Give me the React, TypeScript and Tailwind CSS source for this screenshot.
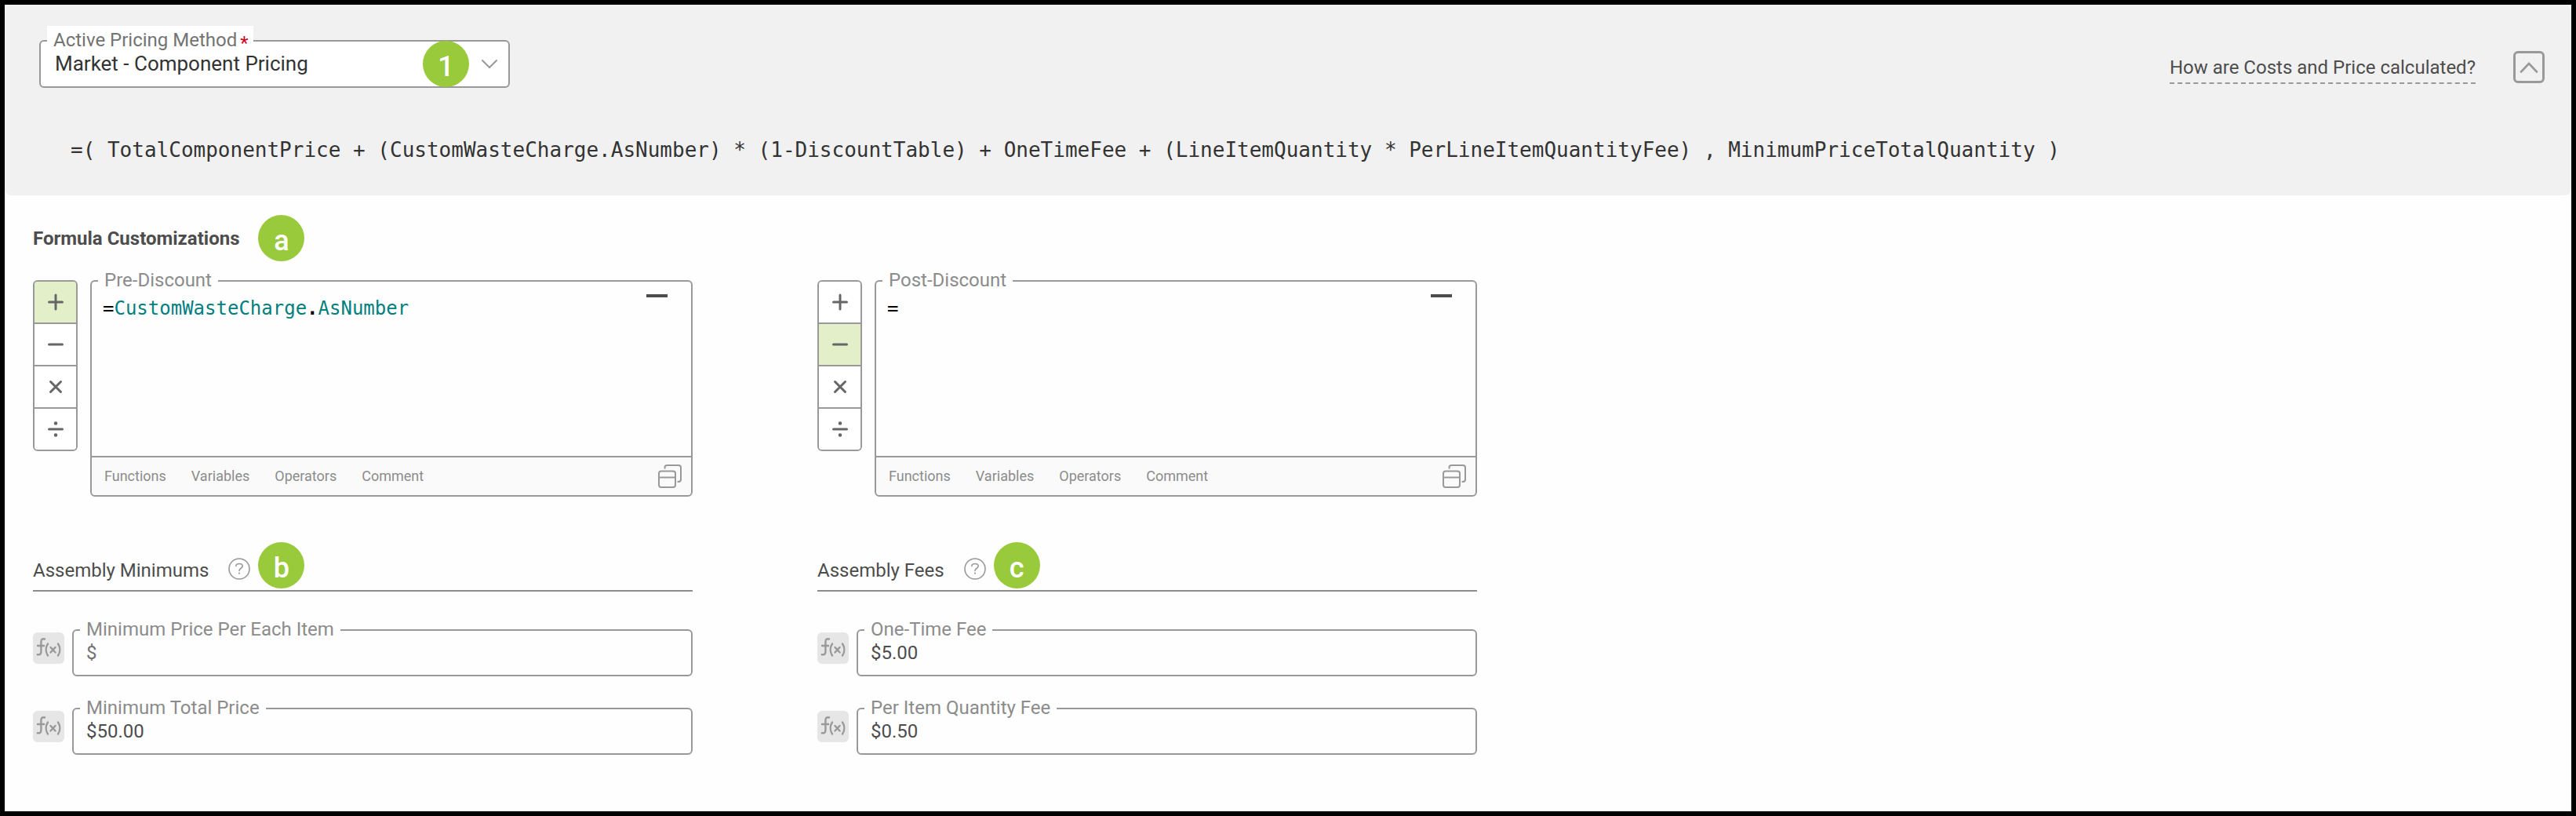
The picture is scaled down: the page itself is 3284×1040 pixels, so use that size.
import { useState, type ReactNode } from "react";

type Operator = "add" | "subtract" | "multiply" | "divide";

const OPERATORS: { id: Operator; label: string; icon: ReactNode }[] = [
  { id: "add", label: "Add", icon: <path d="M3.500 12h17M12 3v18" /> },
  { id: "subtract", label: "Subtract", icon: <path d="M3.500 12h17" /> },
  { id: "multiply", label: "Multiply", icon: <path d="M5.500 5.500l13 13M18.500 5.500l-13 13" /> },
  {
    id: "divide",
    label: "Divide",
    icon: (
      <>
        <path d="M3.500 12h17" />
        <circle cx="12" cy="4.500" r="1.3" fill="currentColor" strokeWidth="2" />
        <circle cx="12" cy="19.500" r="1.3" fill="currentColor" strokeWidth="2" />
      </>
    ),
  },
];

const EDITOR_MENUS = ["Functions", "Variables", "Operators", "Comment"];

function Badge({ children }: { children: ReactNode }) {
  return (
    <span className="flex size-[59px] shrink-0 items-center justify-center rounded-full bg-[#99ca3c] pt-1.5 text-4xl font-medium text-white">
      {children}
    </span>
  );
}

function Highlighted({ code }: { code: string }) {
  return (
    <>
      {code.split(/(\w+)/).map((part, i) =>
        /^\w+$/.test(part) ? (
          <span key={i} className="text-[#007f7f]">
            {part}
          </span>
        ) : (
          <span key={i} className={part === "." ? "font-bold" : ""}>
            {part}
          </span>
        ),
      )}
    </>
  );
}

function FormulaEditor({ id, label, initial, operator }: { id: string; label: string; initial: string; operator: Operator }) {
  const [selected, setSelected] = useState<Operator>(operator);
  const [code, setCode] = useState(initial);
  return (
    <div className="flex items-start gap-4">
      <div
        role="group"
        aria-label={`${label} operator`}
        className="flex w-[57px] shrink-0 flex-col divide-y-2 divide-[#999] overflow-hidden rounded-md border-2 border-[#999] bg-white"
      >
        {OPERATORS.map((op) => (
          <button
            key={op.id}
            type="button"
            aria-label={op.label}
            aria-pressed={selected === op.id}
            onClick={() => setSelected(op.id)}
            className={`flex h-[54px] items-center justify-center text-[#666] last:h-[52px] ${selected === op.id ? "bg-[#e3efc9]" : "bg-white"}`}
          >
            <svg viewBox="0 0 24 24" className="size-6 fill-none stroke-current" strokeWidth="3" strokeLinecap="round">
              {op.icon}
            </svg>
          </button>
        ))}
      </div>
      <div className="relative min-w-0 flex-1 rounded-md border-2 border-[#999] bg-[#fefefe]">
        <label htmlFor={id} className="absolute -top-4 left-2 bg-[#fefefe] px-2 text-2xl/7 text-[#8c8c8c]">
          {label}
        </label>
        <div className="relative h-[222px] font-['DejaVu_Sans_Mono',monospace] text-2xl/8">
          <pre aria-hidden="true" className="h-full overflow-hidden px-3.5 pt-[18px] font-[inherit] text-black">
            <Highlighted code={code} />
          </pre>
          <textarea
            id={id}
            value={code}
            spellCheck={false}
            onChange={(e) => setCode(e.target.value)}
            className="absolute inset-0 resize-none bg-transparent px-3.5 pt-[18px] text-transparent caret-black outline-none"
          />
          <button type="button" aria-label="Minimize" className="absolute top-4 right-[30px] h-1 w-[27px] bg-[#4d4d4d]" />
        </div>
        <div className="flex h-[50px] items-center gap-8 rounded-b-md border-t-2 border-[#999] bg-[#fafafa] pr-3 pl-4 text-lg text-[#8c8c8c]">
          {EDITOR_MENUS.map((menu) => (
            <button key={menu} type="button">
              {menu}
            </button>
          ))}
          <button type="button" aria-label="Open in window" className="ml-auto">
            <svg viewBox="0 0 30 30" className="size-[30px] fill-none stroke-[#999]" strokeWidth="2">
              <rect x="1" y="8.500" width="21" height="20.500" rx="3" />
              <path d="M1 16.500h21M8.500 5.500V4a3 3 0 0 1 3-3H26a3 3 0 0 1 3 3v15a3 3 0 0 1-3 3h-1.500" />
            </svg>
          </button>
        </div>
      </div>
    </div>
  );
}

function MoneyField({ id, label, value }: { id: string; label: string; value: string }) {
  return (
    <div className="flex items-start gap-2.5">
      <button type="button" aria-label={`Edit formula for ${label}`} className="mt-1 shrink-0 rounded-md bg-[#e6e6e6] text-[#999]">
        <svg viewBox="0 0 40 40" className="size-10 fill-none stroke-current" strokeWidth="2.400" strokeLinecap="round">
          <path d="M15 8.500c-3-.8-4.600.3-4.600 3.500v12.500c0 3-1.600 4.300-4.600 3.700M6 17h8" />
          <path d="M19 14.500c-3 4.500-3 10.500 0 15M32 14.500c3 4.500 3 10.500 0 15M22.500 19l6 6.500M28.500 19l-6 6.500" />
        </svg>
      </button>
      <div className="relative min-w-0 flex-1">
        <label htmlFor={id} className="absolute -top-3.5 left-2.5 bg-[#fefefe] px-2 text-2xl/7 text-[#8c8c8c]">
          {label}
        </label>
        <input
          id={id}
          type="text"
          defaultValue={value}
          placeholder="$"
          className="block h-[60px] w-full rounded-md border-2 border-[#999] bg-[#fefefe] px-4 text-2xl text-[#4d4d4d] outline-none placeholder:text-[#737373]"
        />
      </div>
    </div>
  );
}

function Section({ title, badge, children }: { title: string; badge: string; children: ReactNode }) {
  return (
    <section>
      <div className="flex h-[63px] items-start border-b-2 border-[#8c8c8c]">
        <h2 className="mt-5 text-2xl">{title}</h2>
        <button type="button" aria-label={`Help for ${title}`} className="mt-5 ml-[25px]">
          <svg viewBox="0 0 28 28" className="size-7 fill-none stroke-[#999]" strokeWidth="1.600" strokeLinecap="round">
            <circle cx="14" cy="14" r="13" />
            <path d="M9.800 10.500C10 6.500 18.200 6.500 18.200 10.500C18.200 13.500 14 13 14 16.500" />
            <path d="M14 19.500v.3" strokeWidth="2" />
          </svg>
        </button>
        <div className="ml-2.5">
          <Badge>{badge}</Badge>
        </div>
      </div>
      <div className="mt-12 flex flex-col gap-10">{children}</div>
    </section>
  );
}

export default function App() {
  return (
    <div className="min-h-screen border-6 border-black bg-[#fefefe] font-[Roboto,sans-serif] text-[#4d4d4d]">
      <header className="h-[243px] rounded-lg bg-[#f1f1f1]">
        <div className="flex items-start justify-between pt-[45px] pr-[34px] pl-11">
          <div className="relative w-[600px]">
            <label htmlFor="method" className="absolute -top-[18px] left-2.5 flex gap-1 bg-white pt-1 pr-1.5 pl-2 text-2xl/7 text-[#737373]">
              Active Pricing Method <span className="pt-1 text-[#d0021b]">*</span>
            </label>
            <select
              id="method"
              className="block h-[61px] w-full appearance-none rounded-md border-2 border-[#999] bg-white pl-[18px] text-[26px] text-[#333] outline-none"
            >
              <option>Market - Component Pricing</option>
            </select>
            <div className="pointer-events-none absolute inset-y-0 right-4 flex items-center gap-4">
              <Badge>1</Badge>
              <svg viewBox="0 0 20 12" className="h-3 w-5 fill-none stroke-[#999]" strokeWidth="2" strokeLinecap="round">
                <path d="M1 1l9 9 9-9" />
              </svg>
            </div>
          </div>
          <div className="mt-3.5 flex items-start gap-12">
            <a href="#pricing-help" className="border-b-2 border-dashed border-[#999] pt-[5px] pb-[3px] text-2xl">
              How are Costs and Price calculated?
            </a>
            <button
              type="button"
              aria-label="Collapse"
              className="flex h-[41px] w-10 items-center justify-center rounded-md border-3 border-[#999]"
            >
              <svg viewBox="0 0 24 14" className="h-3.5 w-6 fill-none stroke-[#999]" strokeWidth="2.600" strokeLinecap="round">
                <path d="M2 12.500L12 2l10 10.500" />
              </svg>
            </button>
          </div>
        </div>
        <p className="mt-[61px] pl-[84px] font-['DejaVu_Sans_Mono',monospace] text-[26px]/9 text-[#333]">
          =( TotalComponentPrice + (CustomWasteCharge.AsNumber) * (1-DiscountTable) + OneTimeFee + (LineItemQuantity *
          PerLineItemQuantityFee) , MinimumPriceTotalQuantity )
        </p>
      </header>
      <main className="px-9">
        <div className="flex items-center gap-6 pt-[25px]">
          <h1 className="text-2xl font-bold">Formula Customizations</h1>
          <Badge>a</Badge>
        </div>
        <div className="mt-6 grid grid-cols-[repeat(2,minmax(0,841px))] gap-x-[159px] gap-y-[58px]">
          <FormulaEditor id="pre-discount" label="Pre-Discount" initial="=CustomWasteCharge.AsNumber" operator="add" />
          <FormulaEditor id="post-discount" label="Post-Discount" initial="=" operator="subtract" />
          <Section title="Assembly Minimums" badge="b">
            <MoneyField id="min-each" label="Minimum Price Per Each Item" value="" />
            <MoneyField id="min-total" label="Minimum Total Price" value="$50.00" />
          </Section>
          <Section title="Assembly Fees" badge="c">
            <MoneyField id="one-time" label="One-Time Fee" value="$5.00" />
            <MoneyField id="per-item" label="Per Item Quantity Fee" value="$0.50" />
          </Section>
        </div>
      </main>
    </div>
  );
}
